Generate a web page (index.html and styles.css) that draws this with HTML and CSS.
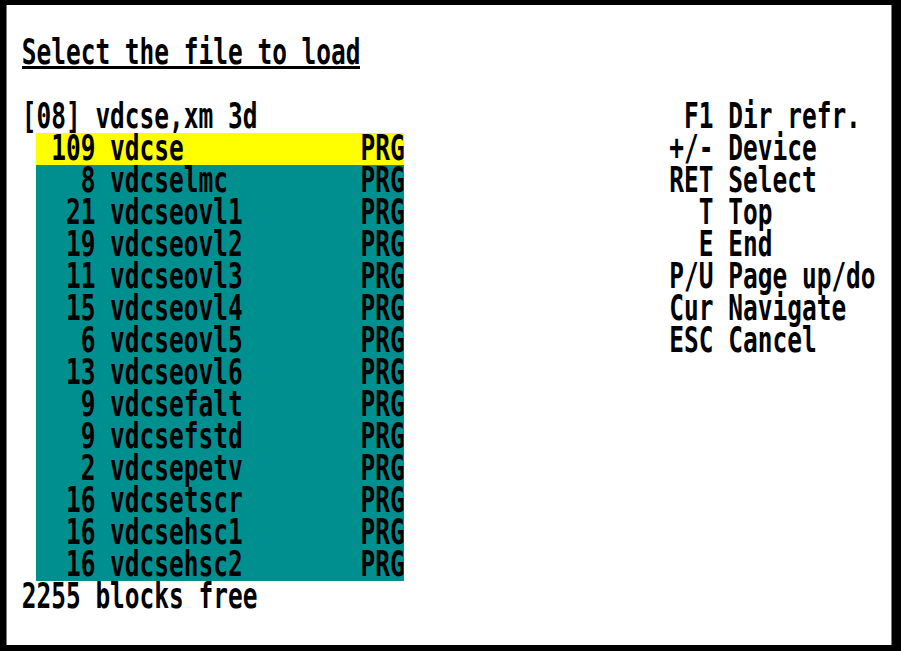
FILE: index.html
```html
<!DOCTYPE html>
<html>
<head>
<meta charset="utf-8">
<link rel="stylesheet" href="styles.css">
</head>
<body>
<div class="frame">
  <div class="screen">
    <div class="title"><span class="t">Select the file to load</span></div>
    <div class="header"><span class="t">[08] vdcse,xm 3d</span></div>
    <div class="list">
      <div class="row sel"><span class="t"> 109 vdcse            PRG</span></div>
      <div class="row"><span class="t">   8 vdcselmc         PRG</span></div>
      <div class="row"><span class="t">  21 vdcseovl1        PRG</span></div>
      <div class="row"><span class="t">  19 vdcseovl2        PRG</span></div>
      <div class="row"><span class="t">  11 vdcseovl3        PRG</span></div>
      <div class="row"><span class="t">  15 vdcseovl4        PRG</span></div>
      <div class="row"><span class="t">   6 vdcseovl5        PRG</span></div>
      <div class="row"><span class="t">  13 vdcseovl6        PRG</span></div>
      <div class="row"><span class="t">   9 vdcsefalt        PRG</span></div>
      <div class="row"><span class="t">   9 vdcsefstd        PRG</span></div>
      <div class="row"><span class="t">   2 vdcsepetv        PRG</span></div>
      <div class="row"><span class="t">  16 vdcsetscr        PRG</span></div>
      <div class="row"><span class="t">  16 vdcsehsc1        PRG</span></div>
      <div class="row"><span class="t">  16 vdcsehsc2        PRG</span></div>
    </div>
    <div class="free"><span class="t">2255 blocks free</span></div>
    <div class="help">
      <div class="row"><span class="t"> F1 Dir refr.</span></div>
      <div class="row"><span class="t">+/- Device</span></div>
      <div class="row"><span class="t">RET Select</span></div>
      <div class="row"><span class="t">  T Top</span></div>
      <div class="row"><span class="t">  E End</span></div>
      <div class="row"><span class="t">P/U Page up/do</span></div>
      <div class="row"><span class="t">Cur Navigate</span></div>
      <div class="row"><span class="t">ESC Cancel</span></div>
    </div>
  </div>
</div>
</body>
</html>
```

FILE: styles.css
```css
html, body {
  margin: 0;
  padding: 0;
  background: #000;
}

.frame {
  width: 901px;
  height: 651px;
  background: #000;
  padding: 5px 0 0 6px;
  box-sizing: border-box;
}

.screen {
  width: 884px;
  height: 640px;
  background: #fff;
  border-left: 1px solid #7a7a7a;
  border-right: 1px solid #7a7a7a;
  display: grid;
  grid-template-columns: repeat(60, 14.7333px);
  grid-template-rows: repeat(20, 32px);
  font-family: "DejaVu Sans Mono", "Liberation Mono", monospace;
  font-weight: bold;
  font-size: 24.47px;
  line-height: 32px;
  color: #000;
  white-space: pre;
  overflow: hidden;
}

.t {
  display: block;
  width: max-content;
  height: 22px;
  line-height: 22px;
  transform: scaleY(1.45);
  transform-origin: 0 0.6px;
}

.title {
  grid-row: 2;
  grid-column: 2 / span 23;
  height: 32px;
  box-sizing: border-box;
  border-bottom: 3px solid #000;
}

.header {
  grid-row: 4;
  grid-column: 2 / span 30;
}

.list {
  grid-row: 5 / span 14;
  grid-column: 3 / span 25;
  background: #008f8f;
  display: flex;
  flex-direction: column;
}

.row {
  height: 32px;
}

.row.sel {
  background: #ffff00;
}

.free {
  grid-row: 19;
  grid-column: 2 / span 20;
}

.help {
  grid-row: 4 / span 8;
  grid-column: 46 / span 15;
  display: flex;
  flex-direction: column;
}
```
